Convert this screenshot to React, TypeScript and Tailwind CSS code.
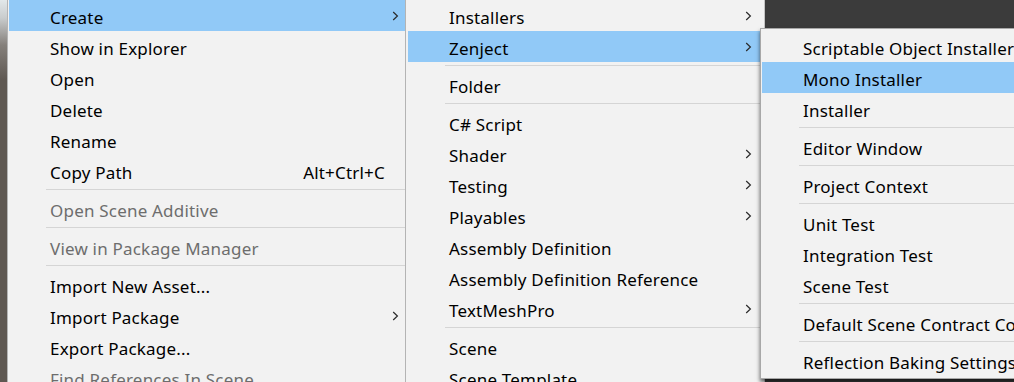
import React from "react"

type Item =
  | { sep: true }
  | { label: string; shortcut?: string; sub?: boolean; disabled?: boolean; active?: boolean; sep?: false }

const createMenu: Item[] = [
  { label: "Create", sub: true, active: true },
  { label: "Show in Explorer" },
  { label: "Open" },
  { label: "Delete" },
  { label: "Rename" },
  { label: "Copy Path", shortcut: "Alt+Ctrl+C" },
  { sep: true },
  { label: "Open Scene Additive", disabled: true },
  { sep: true },
  { label: "View in Package Manager", disabled: true },
  { sep: true },
  { label: "Import New Asset..." },
  { label: "Import Package", sub: true },
  { label: "Export Package..." },
  { label: "Find References In Scene", disabled: true },
]

const assetMenu: Item[] = [
  { label: "Installers", sub: true },
  { label: "Zenject", sub: true, active: true },
  { sep: true },
  { label: "Folder" },
  { sep: true },
  { label: "C# Script" },
  { label: "Shader", sub: true },
  { label: "Testing", sub: true },
  { label: "Playables", sub: true },
  { label: "Assembly Definition" },
  { label: "Assembly Definition Reference" },
  { label: "TextMeshPro", sub: true },
  { sep: true },
  { label: "Scene" },
  { label: "Scene Template" },
]

const zenjectMenu: Item[] = [
  { label: "Scriptable Object Installer" },
  { label: "Mono Installer", active: true },
  { label: "Installer" },
  { sep: true },
  { label: "Editor Window" },
  { sep: true },
  { label: "Project Context" },
  { sep: true },
  { label: "Unit Test" },
  { label: "Integration Test" },
  { label: "Scene Test" },
  { sep: true },
  { label: "Default Scene Contract Config" },
  { sep: true },
  { label: "Reflection Baking Settings" },
]

function Chevron() {
  return (
    <svg width="7" height="10" viewBox="0 0 7 10" fill="none">
      <path d="M1.2 1 L5.4 5 L1.2 9" stroke="#2b2b2b" strokeWidth="1.2" />
    </svg>
  )
}

function MenuList({ items, slot }: { items: Item[]; slot: string }) {
  return (
    <div className="flex flex-col">
      {items.map((it, i) =>
        it.sep ? (
          <div key={i} className="h-[7px] pl-[37px] pt-[3px] shrink-0">
            <div className="h-px bg-[#d5d5d5]" />
          </div>
        ) : (
          <div
            key={i}
            className={`h-[31px] shrink-0 flex items-center pl-[41px] whitespace-nowrap ${
              it.active ? "bg-[#91c9f7]" : ""
            } ${it.disabled ? "text-[#6d6d6d]" : "text-black"}`}
          >
            <span className="flex-1 pt-[3px]">{it.label}</span>
            {it.shortcut && <span className="pt-[3px]">{it.shortcut}</span>}
            <div className={`${slot} h-full flex items-center pl-[7px] shrink-0`}>
              {it.sub && <Chevron />}
            </div>
          </div>
        )
      )}
    </div>
  )
}

export default function App() {
  return (
    <div
      className="relative w-[1014px] h-[382px] overflow-hidden flex bg-[#3b3b3b] text-[17px] leading-none tracking-[0.2px]"
      style={{ fontFamily: '"Noto Sans", "Segoe UI", sans-serif' }}
    >
      {/* project window edge */}
      <div className="w-[7px] shrink-0 bg-[linear-gradient(to_bottom,#e2e8ea_0px,#c9cccd_18px,#85807b_45px,#5f5852_80px,#5f5852_100%)]" />

      {/* context menu */}
      <div className="w-[399px] shrink-0 bg-[#f2f2f2] border-l border-r border-[#b4b4b4] pl-[1px]">
        <MenuList items={createMenu} slot="w-[20px]" />
      </div>

      {/* Create submenu */}
      <div className="w-[359px] shrink-0 bg-[#f2f2f2] border-r border-[#c4c4c4] pl-[2px]">
        <MenuList items={assetMenu} slot="w-[26px]" />
      </div>

      {/* Zenject submenu */}
      <div className="absolute left-[760px] top-[28px] w-[300px] h-[351px] bg-[#f2f2f2] border border-[#a8a8a8] pl-[1px] pt-[2px] shadow-[0_3px_4px_rgba(0,0,0,0.6)]">
        <MenuList items={zenjectMenu} slot="w-[20px]" />
      </div>
    </div>
  )
}
